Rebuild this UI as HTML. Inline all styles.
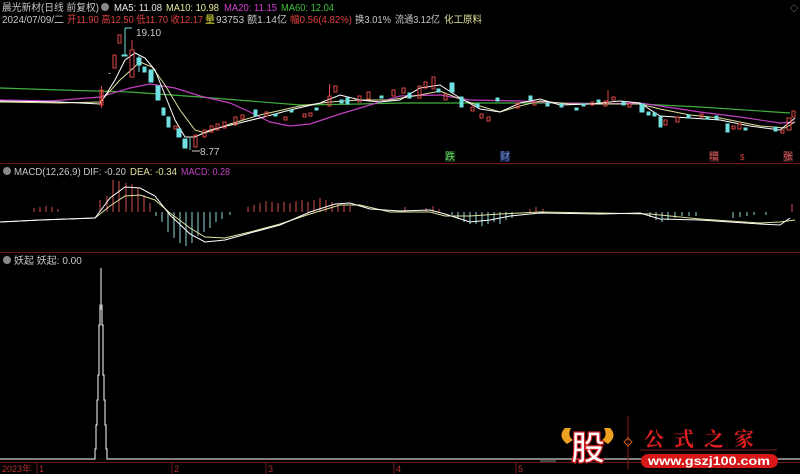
<!DOCTYPE html>
<html><head><meta charset="utf-8"><style>
html,body{margin:0;padding:0;background:#000;width:800px;height:474px;overflow:hidden}
svg{display:block}
text{font-family:"Liberation Sans","Noto Sans CJK SC",sans-serif}
</style></head><body>
<svg width="800" height="474" viewBox="0 0 800 474" font-size="10">
<rect width="800" height="474" fill="#000"/>
<!-- header -->
<text x="2" y="11" fill="#c8c8c8" textLength="97" lengthAdjust="spacingAndGlyphs">晨光新材(日线 前复权)</text>
<circle cx="105" cy="7" r="4" fill="#888"/>
<text x="114" y="11" fill="#e8e8e8" textLength="48" lengthAdjust="spacingAndGlyphs">MA5: 11.08</text>
<text x="166" y="11" fill="#e8e8a0" textLength="53" lengthAdjust="spacingAndGlyphs">MA10: 10.98</text>
<text x="224" y="11" fill="#d040d0" textLength="53" lengthAdjust="spacingAndGlyphs">MA20: 11.15</text>
<text x="281" y="11" fill="#40c040" textLength="53" lengthAdjust="spacingAndGlyphs">MA60: 12.04</text>
<text x="2" y="23" fill="#c8c8c8" textLength="62" lengthAdjust="spacingAndGlyphs">2024/07/09/二</text>
<text x="67" y="23" fill="#e04040" textLength="136" lengthAdjust="spacingAndGlyphs">开11.90 高12.50 低11.70 收12.17</text>
<text x="205" y="23" fill="#e0e040">量</text><text x="216" y="23" fill="#c8c8c8" textLength="71" lengthAdjust="spacingAndGlyphs">93753 额1.14亿</text>
<text x="290" y="23" fill="#e04040" textLength="62" lengthAdjust="spacingAndGlyphs">幅0.56(4.82%)</text>
<text x="355" y="23" fill="#c8c8c8" textLength="36" lengthAdjust="spacingAndGlyphs">换3.01%</text>
<text x="395" y="23" fill="#c8c8c8" textLength="45" lengthAdjust="spacingAndGlyphs">流通3.12亿</text>
<text x="444" y="23" fill="#e0e0a0" textLength="38" lengthAdjust="spacingAndGlyphs">化工原料</text>
<text x="790" y="11" fill="#aaa" style="font-size:8px">◇</text>
<!-- MA lines -->
<polyline fill="none" stroke="#40b040" stroke-width="1.2" points="0,88 60,90 130,92 200,97 250,101 300,105 360,104 400,103 460,103 560,103 640,104 700,107 790,113"/>
<polyline fill="none" stroke="#c040c0" stroke-width="1.2" points="0,100 50,101 100,97 130,88 150,84 175,88 200,96 230,103 250,112 270,122 290,126 310,124 340,114 370,105 400,96 440,95 470,100 520,101 560,103 600,104 640,103 700,112 740,117 780,123 795,122"/>
<polyline fill="none" stroke="#e0e0a0" stroke-width="1" points="0,102 60,103 100,102 120,80 140,62 152,67 165,85 180,110 195,130 205,133 230,124 260,115 300,106 330,102 360,100 390,100 420,95 440,91 460,99 480,106 500,112 520,106 540,101 570,104 600,104 640,104 660,109 690,115 720,118 760,126 785,128 795,122"/>
<polyline fill="none" stroke="#ffffff" stroke-width="1" points="0,101 60,102 100,104 115,80 125,60 135,53 145,58 155,70 165,95 175,120 185,137 195,137 210,130 235,124 260,118 290,110 320,103 340,95 360,100 380,102 400,100 420,88 440,85 460,98 480,109 500,112 520,103 540,99 560,105 590,104 620,101 640,103 660,116 690,118 720,120 750,126 780,130 795,118"/>
<!-- candles red hollow -->
<g fill="none" stroke="#e04848" stroke-width="1">
<rect x="100" y="90" width="3" height="15"/><line x1="101.5" y1="86" x2="101.5" y2="108"/>
<rect x="113" y="55" width="3" height="13"/>
<rect x="118" y="35" width="3" height="8"/>
<rect x="130" y="50" width="4" height="27"/><line x1="132" y1="40" x2="132" y2="50"/>
<rect x="174" y="126" width="3" height="3"/>
<rect x="194" y="135" width="3" height="12"/>
<rect x="203" y="130" width="3" height="7"/><rect x="210" y="126" width="3" height="6"/><rect x="216" y="124" width="3" height="6"/><rect x="223" y="122" width="3" height="6"/>
<rect x="234" y="117" width="3" height="8"/><rect x="241" y="115" width="3" height="4"/>
<rect x="265" y="112" width="3" height="4"/><rect x="284" y="117" width="3" height="3"/><rect x="303" y="114" width="3" height="3"/>
<rect x="309" y="113" width="3" height="3"/><rect x="328" y="96" width="3" height="10"/><line x1="329.5" y1="84" x2="329.5" y2="96"/>
<rect x="334" y="86" width="3" height="6"/><rect x="358" y="96" width="3" height="6"/><rect x="367" y="92" width="3" height="7"/>
<rect x="392" y="90" width="3" height="6"/><rect x="402" y="88" width="3" height="5"/>
<rect x="418" y="86" width="3" height="12"/><rect x="424" y="82" width="3" height="6"/><rect x="432" y="77" width="3" height="12"/>
<rect x="444" y="94" width="3" height="6"/>
<rect x="471" y="107" width="3" height="4"/><rect x="480" y="114" width="3" height="4"/><rect x="487" y="117" width="3" height="4"/>
<rect x="516" y="103" width="3" height="5"/><rect x="533" y="102" width="3" height="3"/><rect x="591" y="102" width="3" height="3"/>
<rect x="604" y="101" width="3" height="5"/><line x1="608" y1="90" x2="608" y2="103"/><rect x="612" y="97" width="3" height="3"/>
<rect x="628" y="104" width="3" height="3"/><rect x="664" y="120" width="3" height="5"/><rect x="676" y="117" width="3" height="5"/>
<rect x="700" y="114" width="3" height="3"/><rect x="732" y="126" width="3" height="3"/><rect x="738" y="124" width="3" height="5"/>
<rect x="781" y="130" width="3" height="3"/><rect x="787" y="118" width="4" height="12"/><rect x="792" y="111" width="3" height="6"/>
</g>
<!-- cyan filled -->
<g fill="#70e0e0" stroke="#70e0e0">
<line x1="125" y1="28" x2="125" y2="56"/><line x1="125" y1="28" x2="132" y2="28"/><rect x="122" y="55" width="5" height="1"/>
<rect x="137" y="58" width="4" height="7"/><line x1="139" y1="55" x2="139" y2="72"/>
<rect x="143" y="67" width="3" height="5"/>
<rect x="149" y="70" width="4" height="12"/>
<rect x="156" y="86" width="4" height="14"/>
<rect x="162" y="108" width="3" height="7"/>
<rect x="167" y="117" width="3" height="10"/>
<rect x="177" y="129" width="4" height="8"/>
<rect x="183" y="139" width="4" height="9"/><line x1="190" y1="138" x2="190" y2="150"/>
<rect x="254" y="110" width="3" height="6"/><rect x="274" y="114" width="3" height="2"/><rect x="290" y="110" width="3" height="2"/>
<rect x="315" y="108" width="3" height="2"/><rect x="340" y="100" width="3" height="3"/><rect x="346" y="98" width="3" height="6"/>
<rect x="380" y="96" width="3" height="2"/><rect x="408" y="93" width="3" height="5"/><rect x="437" y="89" width="3" height="3"/>
<rect x="450" y="83" width="4" height="9"/><rect x="460" y="97" width="3" height="10"/><rect x="476" y="104" width="3" height="3"/>
<rect x="496" y="98" width="3" height="3"/><rect x="529" y="96" width="3" height="4"/><rect x="546" y="103" width="3" height="3"/>
<rect x="560" y="104" width="3" height="3"/><rect x="575" y="108" width="3" height="2"/><rect x="582" y="104" width="3" height="2"/>
<rect x="597" y="100" width="3" height="2"/><rect x="622" y="102" width="3" height="3"/>
<rect x="640" y="104" width="4" height="8"/><rect x="647" y="112" width="3" height="3"/><rect x="653" y="113" width="3" height="3"/>
<rect x="659" y="117" width="3" height="10"/><rect x="687" y="115" width="3" height="3"/><rect x="706" y="117" width="3" height="2"/>
<rect x="715" y="116" width="3" height="3"/><rect x="726" y="124" width="3" height="8"/><rect x="744" y="128" width="3" height="2"/>
<rect x="774" y="127" width="3" height="4"/>
</g>
<text x="108" y="76" fill="#ddd" style="font-size:9px">-</text>
<text x="136" y="36" fill="#ccc">19.10</text>
<line x1="192" y1="151" x2="200" y2="151" stroke="#ccc"/>
<text x="200" y="155" fill="#ccc">8.77</text>
<!-- event labels -->
<rect x="445" y="151" width="10" height="11" fill="#143014"/><text x="445" y="160" fill="#60d060">跌</text>
<rect x="500" y="151" width="10" height="11" fill="#142040"/><text x="500" y="160" fill="#7090e0">财</text>
<rect x="709" y="151" width="10" height="11" fill="#301414"/><text x="709" y="160" fill="#e06060">增</text>
<text x="740" y="160" fill="#d04040" style="font-size:8px">$</text>
<rect x="783" y="151" width="10" height="11" fill="#301414"/><text x="783" y="160" fill="#e06060">张</text>
<!-- separators -->
<line x1="0" y1="163.5" x2="800" y2="163.5" stroke="#701818"/>
<line x1="0" y1="252.5" x2="800" y2="252.5" stroke="#701818"/>
<!-- MACD panel -->
<circle cx="7" cy="171" r="4" fill="#888"/>
<text x="14" y="175" fill="#c8c8c8" textLength="112" lengthAdjust="spacingAndGlyphs">MACD(12,26,9)  DIF: -0.20</text>
<text x="130" y="175" fill="#e0e0a0" textLength="47" lengthAdjust="spacingAndGlyphs">DEA: -0.34</text>
<text x="181" y="175" fill="#c040c0" textLength="49" lengthAdjust="spacingAndGlyphs">MACD: 0.28</text>
<g stroke="#d05050" stroke-width="1">
<line x1="34" y1="212" x2="34" y2="208"/><line x1="40" y1="212" x2="40" y2="207"/><line x1="46" y1="212" x2="46" y2="206"/><line x1="52" y1="212" x2="52" y2="207"/><line x1="58" y1="212" x2="58" y2="209"/>
<line x1="100" y1="212" x2="100" y2="200"/><line x1="107" y1="212" x2="107" y2="196"/><line x1="113" y1="212" x2="113" y2="180"/><line x1="119" y1="212" x2="119" y2="181"/><line x1="126" y1="212" x2="126" y2="183"/><line x1="132" y1="212" x2="132" y2="184"/><line x1="138" y1="212" x2="138" y2="188"/><line x1="144" y1="212" x2="144" y2="195"/><line x1="150" y1="212" x2="150" y2="203"/>
<line x1="248" y1="212" x2="248" y2="207"/><line x1="254" y1="212" x2="254" y2="205"/><line x1="260" y1="212" x2="260" y2="203"/><line x1="266" y1="212" x2="266" y2="201"/><line x1="272" y1="212" x2="272" y2="202"/><line x1="278" y1="212" x2="278" y2="203"/><line x1="284" y1="212" x2="284" y2="202"/><line x1="290" y1="212" x2="290" y2="203"/><line x1="296" y1="212" x2="296" y2="201"/><line x1="302" y1="212" x2="302" y2="200"/><line x1="308" y1="212" x2="308" y2="202"/><line x1="314" y1="212" x2="314" y2="200"/><line x1="320" y1="212" x2="320" y2="198"/><line x1="326" y1="212" x2="326" y2="200"/><line x1="332" y1="212" x2="332" y2="202"/><line x1="338" y1="212" x2="338" y2="204"/><line x1="344" y1="212" x2="344" y2="205"/><line x1="350" y1="212" x2="350" y2="206"/>
<line x1="405" y1="212" x2="405" y2="207"/><line x1="426" y1="212" x2="426" y2="208"/><line x1="433" y1="212" x2="433" y2="206"/><line x1="439" y1="212" x2="439" y2="209"/>
<line x1="530" y1="212" x2="530" y2="209"/><line x1="536" y1="212" x2="536" y2="207"/><line x1="543" y1="212" x2="543" y2="209"/>
<line x1="792" y1="212" x2="792" y2="204"/>
</g>
<g stroke="#90d8d8" stroke-width="1">
<line x1="156" y1="212" x2="156" y2="216"/><line x1="162" y1="212" x2="162" y2="222"/><line x1="168" y1="212" x2="168" y2="232"/><line x1="174" y1="212" x2="174" y2="238"/><line x1="180" y1="212" x2="180" y2="243"/><line x1="186" y1="212" x2="186" y2="246"/><line x1="192" y1="212" x2="192" y2="243"/><line x1="198" y1="212" x2="198" y2="236"/><line x1="204" y1="212" x2="204" y2="232"/><line x1="210" y1="212" x2="210" y2="228"/><line x1="216" y1="212" x2="216" y2="222"/><line x1="222" y1="212" x2="222" y2="219"/><line x1="230" y1="212" x2="230" y2="215"/>
<line x1="452" y1="212" x2="452" y2="215"/><line x1="458" y1="212" x2="458" y2="219"/><line x1="464" y1="212" x2="464" y2="222"/><line x1="470" y1="212" x2="470" y2="224"/><line x1="476" y1="212" x2="476" y2="224"/><line x1="482" y1="212" x2="482" y2="226"/><line x1="488" y1="212" x2="488" y2="224"/><line x1="494" y1="212" x2="494" y2="222"/><line x1="500" y1="212" x2="500" y2="224"/><line x1="506" y1="212" x2="506" y2="220"/><line x1="512" y1="212" x2="512" y2="218"/>
<line x1="650" y1="212" x2="650" y2="217"/><line x1="656" y1="212" x2="656" y2="220"/><line x1="662" y1="212" x2="662" y2="222"/><line x1="668" y1="212" x2="668" y2="220"/><line x1="675" y1="212" x2="675" y2="218"/><line x1="682" y1="212" x2="682" y2="216"/><line x1="689" y1="212" x2="689" y2="216"/><line x1="696" y1="212" x2="696" y2="216"/><line x1="733" y1="212" x2="733" y2="218"/><line x1="740" y1="212" x2="740" y2="217"/><line x1="747" y1="212" x2="747" y2="216"/><line x1="754" y1="212" x2="754" y2="215"/><line x1="766" y1="212" x2="766" y2="215"/>
</g>
<polyline fill="none" stroke="#e0e0a0" stroke-width="1" points="0,222 40,220 95,218 110,206 125,196 140,195 155,200 170,213 190,228 205,237 225,238 250,232 280,224 310,214 340,205 360,205 390,212 430,212 445,216 470,216 500,214 540,212 600,213 650,214 700,219 760,223 780,222 795,220"/>
<polyline fill="none" stroke="#ffffff" stroke-width="1" points="0,222 40,220 95,218 110,198 125,187 140,188 155,196 170,215 190,234 205,242 225,240 250,233 280,225 310,212 335,204 350,203 370,209 400,211 430,210 445,214 470,222 490,220 510,216 540,213 600,214 640,213 660,219 700,220 760,224 780,225 790,218"/>
<!-- 妖起 panel -->
<circle cx="7" cy="260" r="4" fill="#888"/>
<text x="14" y="264" fill="#c8c8c8">妖起  妖起: 0.00</text>
<polyline fill="none" stroke="#ffffff" stroke-width="1" points="0,459 95,459 95,449 96,449 96,425 97,425 97,400 98,400 98,375 99,375 99,325 100,325 100,305 101,305 101,300"/>
<polyline fill="none" stroke="#ffffff" stroke-width="1" points="800,459 107,459 107,449 106,449 106,425 105,425 105,400 104,400 104,375 103,375 103,325 102,325 102,305 101,305"/>
<line x1="101" y1="268" x2="101" y2="310" stroke="#aaa" stroke-width="1.5"/>
<!-- axis -->
<line x1="0" y1="462.5" x2="800" y2="462.5" stroke="#701818"/>
<g fill="#b03030" style="font-size:9px">
<text x="2" y="472">2023年</text><text x="39" y="472">1</text><text x="174" y="472">2</text><text x="268" y="472">3</text><text x="396" y="472">4</text><text x="518" y="472">5</text>
</g>
<g stroke="#701818"><line x1="37" y1="463" x2="37" y2="474"/><line x1="172" y1="463" x2="172" y2="474"/><line x1="266" y1="463" x2="266" y2="474"/><line x1="394" y1="463" x2="394" y2="474"/><line x1="516" y1="463" x2="516" y2="474"/></g>
<!-- watermark -->
<path d="M565,428 q-8,8 2,16 l6,-4 q-6,-4 -2,-12 z" fill="#f0a020"/>
<path d="M610,428 q8,8 -2,16 l-6,-4 q6,-4 2,-12 z" fill="#f0a020"/>
<text x="571" y="460" fill="#fff" stroke="#d02020" stroke-width="1.2" style="font-size:34px;font-weight:bold;font-family:'Noto Sans CJK SC',sans-serif">股</text>
<line x1="628" y1="416" x2="628" y2="470" stroke="#802020"/>
<path d="M628,438 l4,4 l-4,4 l-4,-4 z" fill="none" stroke="#d06020"/>
<text x="644" y="446" fill="#e02020" style="font-size:20px;font-weight:bold;letter-spacing:10px;font-family:'Noto Serif CJK SC',serif">公式之家</text>
<line x1="640" y1="450" x2="777" y2="450" stroke="#802020"/>
<rect x="641" y="454" width="137" height="14" rx="7" fill="#d81818"/>
<text x="648" y="465" fill="#fff" style="font-size:12px;font-weight:bold" textLength="122" lengthAdjust="spacingAndGlyphs">www.gszj100.com</text>
<line x1="540" y1="461" x2="556" y2="461" stroke="#888"/>
</svg>
</body></html>
